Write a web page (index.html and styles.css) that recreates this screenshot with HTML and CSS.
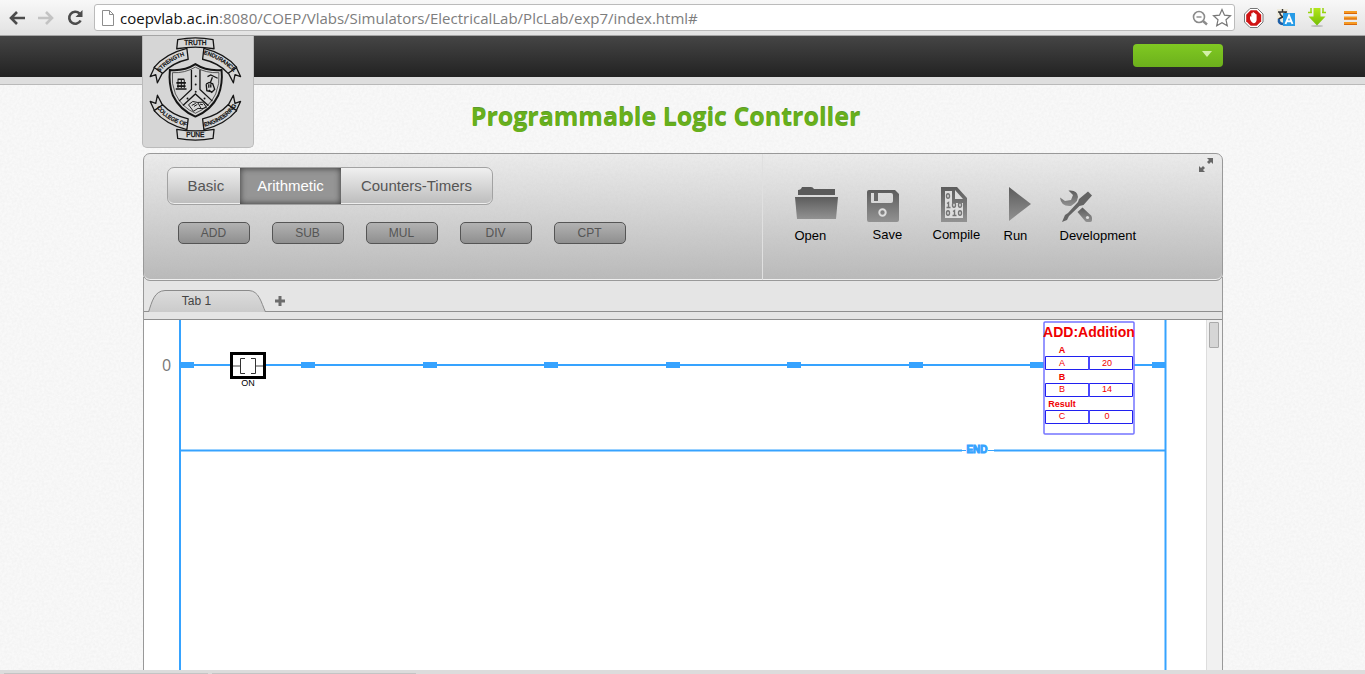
FILE: index.html
```html
<!DOCTYPE html>
<html lang="en">
<head>
<meta charset="utf-8">
<title>Programmable Logic Controller</title>
<link rel="stylesheet" href="styles.css">
</head>
<body>
<nav class="browser-bar" aria-label="Browser">
  <button class="icon-btn" aria-label="Back"><svg width="20" height="20" viewBox="0 0 20 20"><path d="M18 10H5M10 4L4 10l6 6" fill="none" stroke="#4c4c4c" stroke-width="2.6"/></svg></button>
  <button class="icon-btn" aria-label="Forward"><svg width="20" height="20" viewBox="0 0 20 20"><path d="M2 10h13M10 4l6 6-6 6" fill="none" stroke="#c3c3c3" stroke-width="2.6"/></svg></button>
  <button class="icon-btn" aria-label="Reload"><svg width="20" height="20" viewBox="0 0 20 20"><path d="M14.5 5.5A6 6 0 1 0 15.600 12.500" fill="none" stroke="#4c4c4c" stroke-width="2.600"/><path d="M17.500 2v7h-7z" fill="#4c4c4c"/></svg></button>
  <label class="omnibox">
    <svg width="14" height="16" viewBox="0 0 14 16"><path d="M1.500 .5h7l4 4v11h-11zM8.500 .5v4h4" fill="#fff" stroke="#8d8d8d"/></svg>
    <span class="host">coepvlab.ac.in</span><input class="url" type="text" aria-label="Address" value=":8080/COEP/Vlabs/Simulators/ElectricalLab/PlcLab/exp7/index.html#">
    <svg width="18" height="18" viewBox="0 0 18 18"><g fill="none" stroke="#8b8b8b"><circle cx="7" cy="8" r="5.500" stroke-width="1.600"/><path d="M4.500 8h5" stroke-width="1.400"/><path d="M11 12l4 3.500" stroke-width="2.400"/></g></svg>
    <svg width="22" height="20" viewBox="0 0 22 20"><path d="M12 1.500l2.500 5.700 6 .6-4.500 4 1.300 6L12 14.700 6.700 17.800 8 11.800 3.500 7.800l6-.6z" fill="#fff" stroke="#777" stroke-width="1.200"/></svg>
  </label>
  <div class="extensions">
    <button class="icon-btn" aria-label="Ad blocker"><svg width="20" height="20" viewBox="0 0 20 20"><path d="M6 .5h7.500l5.500 5.500v8l-5.500 5.500H6L.5 14V6z" fill="#fff" stroke="#777"/><path d="M6.700 2.300h6l4.500 4.500v6.400l-4.500 4.500h-6l-4.500-4.500V6.800z" fill="#d01313"/><path d="M6 8.500q.8-.6 1.300.4V5.500q.7-1 1.300 0V4.500q.7-.9 1.300 0v.8q.8-.9 1.400 0v1q.8-.7 1.300.2V12q-.3 3-3 3.200Q7.500 15 6 11z" fill="#fff"/></svg></button>
    <button class="icon-btn" aria-label="Translate"><svg width="20" height="20" viewBox="0 0 20 20"><path d="M1 1h11v13H1z" fill="#eeeadb"/><path d="M2 4h9M6.500 1v3M3.500 4q1 5 7 7M9.500 4q-1 5-7 7" fill="none" stroke="#333" stroke-width="1.400"/><path d="M3 11q-1 5 5 5" fill="none" stroke="#1d5fa8" stroke-width="2.500"/><rect x="7" y="5" width="12" height="13" fill="#279be6"/><path d="M9.500 16L13 7.500 16.500 16M11 13.300h4" fill="none" stroke="#fff" stroke-width="1.900"/></svg></button>
    <button class="icon-btn" aria-label="Download"><svg width="20" height="20" viewBox="0 0 20 20"><defs><linearGradient id="lime" x2="0" y2="1"><stop offset="0" stop-color="#b4e61a"/><stop offset="1" stop-color="#74be06"/></linearGradient></defs><ellipse cx="9" cy="18" rx="6" ry="1" fill="#bbb"/><path d="M5.500 0h7v8.500H17.500L9 17.500 .5 8.500h5z" fill="url(#lime)"/><path d="M3 0v5M15 0v5" stroke="#96d40c" stroke-width="1.500"/><path d="M0 4.500h4M14 4.500h4" stroke="#96d40c" stroke-width="1.500"/></svg></button>
    <button class="icon-btn" aria-label="Menu"><svg width="20" height="20" viewBox="0 0 20 20"><path d="M4 4.500h13M4 10h13M4 15.500h13" stroke="#f59a23" stroke-width="3"/><path d="M4 5.500h13M4 11h13M4 16.500h13" stroke="#d9670a"/></svg></button>
  </div>
</nav>

<div class="page">
  <header class="top-bar">
    <div class="container top-inner">
      <a class="crest" href="#" aria-label="College of Engineering Pune">
        <svg viewBox="6 4 336 336">
          <defs>
            <path id="arc-s" d="M56 115Q92 73 146 60"/>
            <path id="arc-e" d="M191 60Q242 72 284 115"/>
            <path id="arc-c" d="M48 223Q82 268 144 280"/>
            <path id="arc-p" d="M194 280Q250 268 288 222"/>
            <g id="ribbons" fill="#d6d6d6" stroke="#151515" stroke-width="4" stroke-linejoin="round">
              <path d="M42 98L28 128 45 122 50 147 66 116zM290 98l14 30-17-6-5 25-16-31z"/>
              <path d="M40 100Q75 58 140 42l4 33Q95 86 66 118zM292 100Q257 58 192 42l-4 33q49 11 78 43z"/>
              <path d="M112 15Q166 5 220 15l3 28Q166 33 109 43z"/>
            </g>
          </defs>
          <use href="#ribbons"/>
          <use href="#ribbons" transform="matrix(1 0 0 -1 0 332)"/>
          <g fill="none" stroke="#151515">
            <path d="M88 108Q132 112 166 90 200 112 246 108 250 150 236 185 215 230 166 250 118 230 97 185 84 150 88 108z" stroke-width="6"/>
            <path d="M96 116Q134 118 166 99 198 118 238 116 241 150 228 181 209 222 166 240 125 222 105 181 92 150 96 116z" stroke-width="2"/>
            <path d="M154 107v60l-38 36M180 107v60l38 36M128 216l38-35 40 36" stroke-width="4"/>
            <path d="M112 136h20M108 147h29M110 157h26M106 166h33" stroke-width="5"/>
            <path d="M113 137v26M123 137v26M132 137v26" stroke-width="3"/>
            <path d="M203 128l10-5 21 10M218 130l-7 18M199 151l9-5 11 4 6 17-9 9-9-7M199 151l2 20 11 3M207 151v11M213 151v10" stroke-width="4"/>
            <path d="M145 214l13-10 15 3 16-1 11 16-14 4-12-1-14 9zM173 207l11 19M155 216l12-6M162 219l10-6M180 212l9 2" stroke-width="3"/>
          </g>
          <g fill="#151515"><circle cx="167" cy="127" r="3"/><circle cx="167" cy="152" r="3"/><circle cx="167" cy="174" r="3"/><circle cx="142" cy="195" r="3"/><circle cx="194" cy="195" r="3"/></g>
          <g class="crest-text">
            <text x="166" y="33" class="crest-mid">TRUTH</text>
            <text x="166" y="314" class="crest-mid">PUNE</text>
            <text><textPath href="#arc-s">STRENGTH</textPath></text>
            <text><textPath href="#arc-e">ENDURANCE</textPath></text>
            <text><textPath href="#arc-c">COLLEGE OF</textPath></text>
            <text><textPath href="#arc-p">ENGINEERING</textPath></text>
          </g>
        </svg>
      </a>
      <button class="user-menu" aria-label="Account menu"><svg width="10" height="6" viewBox="0 0 10 6"><path d="M0 0h10L5 6z" fill="#d3f0a8"/></svg></button>
    </div>
  </header>

  <main class="container">
    <h1 class="title">Programmable Logic Controller</h1>

    <section class="panel">
      <div class="palette">
        <div class="tabs">
          <button>Basic</button><button class="active">Arithmetic</button><button>Counters-Timers</button>
        </div>
        <div class="ops">
          <button>ADD</button><button>SUB</button><button>MUL</button><button>DIV</button><button>CPT</button>
        </div>
      </div>
      <div class="tools">
        <svg class="defs" width="0" height="0"><linearGradient id="steel" x2="0" y2="1"><stop offset="0" stop-color="#5c5c5c"/><stop offset="1" stop-color="#929292"/></linearGradient></svg>
        <button class="tool open"><svg width="43" height="36" viewBox="0 0 43 36"><path d="M3 9V4q3 0 4-3h9q2 0 3 2h21v6z" fill="#5a5a5a"/><path d="M0 11h43l-2 22H2z" fill="url(#steel)"/></svg>Open</button>
        <button class="tool save"><svg width="32" height="36" viewBox="0 0 32 36"><path fill-rule="evenodd" d="M2 4h26l4 4v26q0 2-2 2H2q-2 0-2-2V6q0-2 2-2zM4 7v9q0 1 1 1h19q2 0 2-2V9q0-2-2-2z" fill="url(#steel)"/><path d="M7 7h4v8H7z" fill="#686868"/><circle cx="15.500" cy="26.500" r="3.200" fill="none" stroke="#ddd" stroke-width="2"/></svg>Save</button>
        <button class="tool compile"><svg width="26" height="36" viewBox="0 0 26 36"><path d="M0 1h16l10 11v24H0z" fill="url(#steel)"/><path d="M4 5h7v12h11v15H4zM14 4l8 9h-8z" fill="#ddd"/><g fill="none" stroke="#747474" stroke-width="1.400"><ellipse cx="7" cy="10" rx="1.500" ry="2.300"/><ellipse cx="13" cy="19" rx="1.500" ry="2.300"/><ellipse cx="19" cy="19" rx="1.500" ry="2.300"/><ellipse cx="7" cy="27" rx="1.500" ry="2.300"/><ellipse cx="19" cy="27" rx="1.500" ry="2.300"/><path d="M6 17.500l1.500-1v5M5.500 21.500h4M12 25.500l1.500-1v5M11.500 29.500h4"/></g></svg>Compile</button>
        <button class="tool run"><svg width="22" height="36" viewBox="0 0 22 36"><path d="M0 1l22 17L0 35z" fill="url(#steel)"/></svg>Run</button>
        <button class="tool dev"><svg width="32" height="36" viewBox="0 0 32 36"><path d="M8.500 4.500q9-1 9.500 6.500-.5 4-3 6l-4 3Q1 21 0 11.500l5 3.500 6-1 2-5z" fill="url(#steel)"/><path d="M17.500 26l5-4.500 8.500 8q2 3 .5 6-3 1.500-6 0z" fill="url(#steel)"/><path d="M2 36l3-7 3-2 10-11 1-3 9-7.500 4 4-8.500 9.500-4 1L9 30l-2 4z" fill="#646464"/><circle cx="27.500" cy="31.500" r="1.600" fill="#ddd"/></svg>Development</button>
      </div>
      <button class="expand" aria-label="Full screen"><svg width="14" height="14" viewBox="0 0 14 14"><path d="M8 0h6v6l-2-2-2 2-2-2 2-2zM0 8l2 2 2-2 2 2-2 2 2 2H0z" fill="#666"/></svg></button>
    </section>

    <section class="workspace">
      <div class="sheet-tabs">
        <button class="sheet"><svg width="118" height="22" viewBox="0 0 118 22"><defs><linearGradient id="sheet-fill" x2="0" y2="1"><stop offset="0" stop-color="#dcdcdc"/><stop offset="1" stop-color="#cbcbcb"/></linearGradient></defs><path d="M.5 22C4 12 6 1 17 .5H101C111 1 113 12 117.500 22" fill="url(#sheet-fill)" stroke="#8a8a8a"/></svg><span>Tab 1</span></button>
        <button class="add-sheet" aria-label="Add tab"><svg width="10" height="10" viewBox="0 0 10 10"><path d="M5 0v10M0 5h10" stroke="#6c6c6c" stroke-width="3"/></svg></button>
      </div>
      <div class="viewport">
        <svg class="ladder" role="img" aria-label="Ladder diagram">
          <g stroke="#36a3ff" stroke-width="2">
            <path d="M36 45H900M900 45H1021M37 130.500H818M850 130.500H1021"/>
            <line x1="36" y1="0" x2="36" y2="100%"/>
            <line x1="1021.500" y1="0" x2="1021.500" y2="100%"/>
          </g>
          <path d="M818 130.500h4M844 130.500h6" stroke="#36a3ff"/>
          <path d="M36 42h14v6H36zM157 42h14v6h-14zM279 42h14v6h-14zM400 42h14v6h-14zM522 42h14v6h-14zM643 42h14v6h-14zM765 42h14v6h-14zM886 42h14v6h-14zM1008 42h14v6h-14z" fill="#36a3ff"/>
          <text class="rung" x="18" y="51">0</text>
          <rect x="87.500" y="33.500" width="33" height="24" fill="#fff" stroke="#000" stroke-width="3"/>
          <path d="M89 46h7M112 46h7" stroke="#444" stroke-width="1"/>
          <path d="M101 38.500h-4.500v15h4.500M107 38.500h4.500v15H107" fill="none" stroke="#333"/>
          <text class="tag" x="104" y="66">ON</text>
          <g fill="#fff" stroke="#7474ff">
            <rect x="900" y="2" width="90" height="112" rx="1" stroke-width="1.500"/>
            <g stroke="#2020f0" stroke-width="1"><path d="M901.500 36.500h87v13h-87zM901.500 63.500h87v13h-87zM901.500 90.500h87v13h-87z"/><path d="M945 36v14M945 63v14M945 90v14" stroke="#4848ff" stroke-width="2"/></g>
          </g>
          <text class="block-name" x="945" y="17">ADD:Addition</text>
          <g class="caption"><text x="918" y="33">A</text><text x="918" y="60">B</text><text x="918" y="87">Result</text></g>
          <g class="cell"><text x="918" y="46">A</text><text x="963" y="46">20</text><text x="918" y="72">B</text><text x="963" y="72">14</text><text x="918" y="99">C</text><text x="963" y="99">0</text></g>
          <text class="end" x="833" y="133">END</text>
        </svg>
        <div class="scrollbar"><div class="thumb"></div></div>
      </div>
    </section>
  </main>
</div>
<footer class="window-edge"><span></span><span></span></footer>
</body>
</html>
```
FILE: styles.css
```css
* { box-sizing: border-box; }
:root {
  --grain: url("data:image/svg+xml,%3Csvg xmlns='http://www.w3.org/2000/svg' width='120' height='120'%3E%3Cfilter id='n'%3E%3CfeTurbulence type='fractalNoise' baseFrequency='.4' numOctaves='2' stitchTiles='stitch'/%3E%3CfeColorMatrix values='0 0 0 0 .5 0 0 0 0 .5 0 0 0 0 .5 .16 0 0 0 -.04'/%3E%3C/filter%3E%3Crect width='120' height='120' filter='url(%23n)'/%3E%3C/svg%3E");
}
body {
  margin: 0;
  height: 100vh;
  display: flex;
  flex-direction: column;
  font-family: "Liberation Sans", Arial, sans-serif;
  background: #f7f7f7;
}
button { font: inherit; border: 0; padding: 0; background: none; }
svg { display: block; flex: none; }

/* browser chrome */
.browser-bar {
  height: 36px;
  flex: none;
  display: flex;
  align-items: center;
  gap: 9px;
  padding: 0 5px 0 7px;
  background: linear-gradient(#f8f8f8, #e2e2e2);
  border-bottom: 1px solid #a5a5a5;
}
.omnibox {
  flex: 1;
  height: 27px;
  display: flex;
  align-items: center;
  padding: 0 2px 0 6px;
  background: #fff;
  border: 1px solid #bbb;
  border-radius: 3px;
  font: 15px/20px "Open Sans", sans-serif;
}
.host { color: #111; margin-left: 5px; }
.url { flex: 1; border: 0; padding: 0; font: inherit; color: #7d7d7d; outline: 0; background: none; }
.extensions { display: flex; gap: 12px; }

/* page frame */
.page { flex: 1; min-height: 0; display: flex; flex-direction: column; background: var(--grain) #f9f9f9; }
.container { width: 100%; max-width: 1080px; margin: 0 auto; }
.top-bar {
  flex: none;
  background: linear-gradient(#454545, #222);
  border-bottom: 7px solid #dedede;
  box-shadow: 0 1px #b9b9b9;
}
.top-inner { position: relative; height: 41px; display: flex; justify-content: flex-end; align-items: flex-start; padding-top: 8px; }
.crest {
  position: absolute;
  left: -1px;
  top: 0;
  width: 112px;
  height: 112px;
  background: #d6d6d6;
  border: 1px solid #bbb;
  border-top: 0;
  border-radius: 0 0 5px 5px;
}
.crest-text { font-size: 17px; fill: #151515; stroke: #151515; stroke-width: 1px; }
.crest-mid { font-size: 20px; text-anchor: middle; }
.user-menu {
  width: 90px;
  height: 23px;
  display: flex;
  justify-content: flex-end;
  padding: 7px 11px;
  background: linear-gradient(#80c922, #6cb01c);
  border-radius: 4px;
}
main.container { flex: 1; min-height: 0; display: flex; flex-direction: column; }
.title {
  margin: 0;
  padding: 14px 34px 0 0;
  height: 69px;
  flex: none;
  text-align: center;
  font: 700 25px/36px "Open Sans", sans-serif;
  color: #68b01c;
  text-shadow: 0 -1px #5c9a2c;
}

/* tool panel */
.panel {
  position: relative;
  z-index: 1;
  flex: none;
  height: 128px;
  display: flex;
  background: var(--grain), linear-gradient(#ececec, #b9b9b9);
  border: 1px solid #999;
  border-radius: 7px;
  box-shadow: inset 0 -1px #f0f0f0;
}
.palette { flex: 0 0 619px; padding: 13px 23px; border-right: 1px solid #e0e0e0; }
.tabs {
  display: inline-flex;
  height: 38px;
  border: 1px solid #a2a2a2;
  border-radius: 7px;
  background: linear-gradient(#f0f0f0, #bcbcbc);
  box-shadow: inset 0 -1px #eee;
  font-size: 15px;
}
.tabs button { padding: 0 20px 2px; color: #555; }
.tabs button:first-child { padding-right: 16px; }
.tabs .active { padding: 0 17px 2px; color: #fff; background: #959595; box-shadow: inset 0 0 6px #333; }
.ops { display: flex; gap: 22px; padding: 17px 11px 0; }
.ops button {
  width: 72px;
  height: 22px;
  border: 1px solid #555;
  border-radius: 5px;
  background: linear-gradient(#b2b2b2, #8f8f8f);
  font-size: 12px;
  color: #555;
}
.tools { flex: 1; display: flex; gap: 24px; align-items: flex-start; padding: 32px 0 0 32px; }
.defs { position: absolute; }
.tool {
  display: flex;
  flex-direction: column;
  gap: 6px;
  font-size: 13px;
  line-height: 16px;
  text-align: left;
  color: #000;
}
.open { width: 48px; }
.save { width: 42px; padding-left: 6px; }
.save svg { margin-left: -6px; }
.compile { width: 47px; }
.compile svg { margin-left: 8px; }
.run { width: 32px; }
.run svg { margin-left: 5px; }
.save, .compile { gap: 5px; }
.expand { position: absolute; top: 4px; right: 9px; }

/* ladder workspace */
.workspace {
  flex: 1;
  min-height: 0;
  margin-top: -4px;
  display: flex;
  flex-direction: column;
  background: #e5e5e5;
  border: 1px solid #999;
  border-width: 0 1px;
}
.sheet-tabs { flex: none; height: 35px; display: flex; align-items: flex-end; gap: 9px; padding-left: 4px; border-bottom: 1px solid #8f8f8f; }
.sheet { display: grid; font-size: 12px; color: #444; margin-bottom: -1px; }
.sheet svg, .sheet span { grid-area: 1 / 1; }
.sheet span { align-self: center; padding-right: 20px; }
.add-sheet { margin-bottom: 5px; }
.viewport { flex: 1; min-height: 0; margin-top: 7px; display: flex; background: #fff; border-top: 1px solid #8f8f8f; }
.ladder { flex: 1; min-width: 0; height: 100%; }
.rung { font: 16px "Open Sans", sans-serif; fill: #777; }
.tag { font-size: 9px; text-anchor: middle; }
.block-name { font-size: 14px; font-weight: bold; fill: #f00000; text-anchor: middle; }
.caption { font-size: 9px; font-weight: bold; fill: #f00000; text-anchor: middle; }
.cell { font-size: 9px; fill: #f00000; text-anchor: middle; }
.end { font-size: 10px; font-weight: bold; fill: #36a3ff; stroke: #36a3ff; stroke-width: 1px; text-anchor: middle; }
.scrollbar { flex: none; width: 16px; background: #f1f1f1; border-left: 1px solid #ddd; padding: 2px; }
.thumb { width: 10px; height: 26px; background: #d6d6d6; border: 1px solid #aaa; border-radius: 1px; }

.window-edge { flex: none; height: 4px; display: flex; gap: 4px; padding: 3px 4px 0; background: #dcdcdc; }
.window-edge span { width: 204px; background: #c4c4c4; }
```
